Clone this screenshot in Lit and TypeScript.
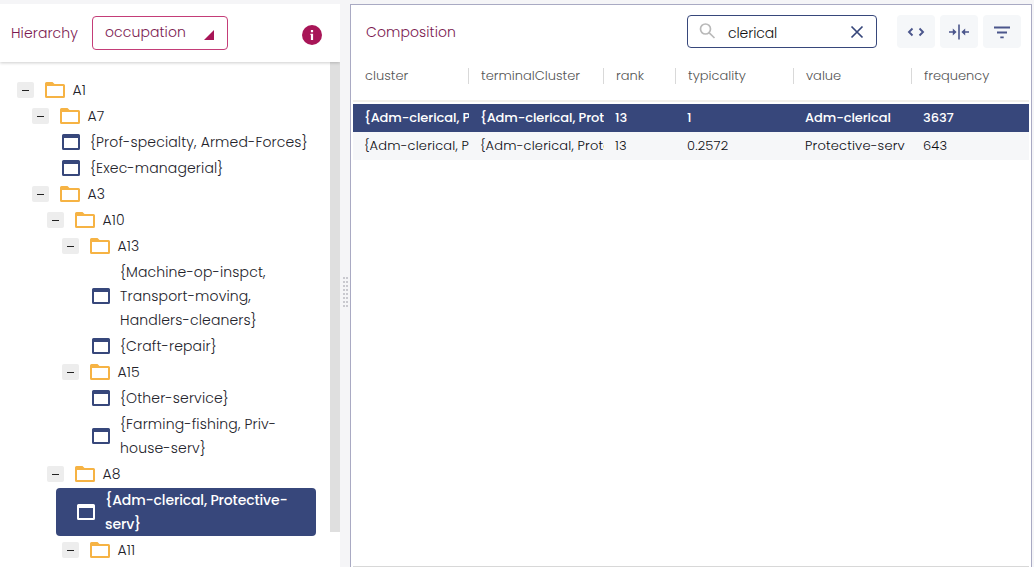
import { LitElement, html, css, svg, nothing } from "lit";
import { customElement } from "lit/decorators.js";
import { classMap } from "lit/directives/class-map.js";
import { styleMap } from "lit/directives/style-map.js";

interface TreeItem { level: number; lines: string[]; leaf?: boolean; selected?: boolean; }

const TREE: TreeItem[] = [
  { level: 0, lines: ["A1"] },
  { level: 1, lines: ["A7"] },
  { level: 2, leaf: true, lines: ["{Prof-specialty, Armed-Forces}"] },
  { level: 2, leaf: true, lines: ["{Exec-managerial}"] },
  { level: 1, lines: ["A3"] },
  { level: 2, lines: ["A10"] },
  { level: 3, lines: ["A13"] },
  { level: 4, leaf: true, lines: ["{Machine-op-inspct,", "Transport-moving,", "Handlers-cleaners}"] },
  { level: 4, leaf: true, lines: ["{Craft-repair}"] },
  { level: 3, lines: ["A15"] },
  { level: 4, leaf: true, lines: ["{Other-service}"] },
  { level: 4, leaf: true, lines: ["{Farming-fishing, Priv-", "house-serv}"] },
  { level: 2, lines: ["A8"] },
  { level: 3, leaf: true, selected: true, lines: ["{Adm-clerical, Protective-", "serv}"] },
  { level: 3, lines: ["A11"] },
];

const COLUMNS = ["cluster", "terminalCluster", "rank", "typicality", "value", "frequency"];

const ROWS = [
  { selected: true, cells: ["{Adm-clerical, Protective-serv}", "{Adm-clerical, Protective-serv}", "13", "1", "Adm-clerical", "3637"] },
  { selected: false, cells: ["{Adm-clerical, Protective-serv}", "{Adm-clerical, Protective-serv}", "13", "0.2572", "Protective-serv", "643"] },
];

const folderIcon = svg`<svg class="folder" width="20" height="16" viewBox="0 0 20 16">
  <path fill="#f6b344" fill-rule="evenodd" d="M1.5 0H7.5L9.5 2H18.5Q20 2 20 3.5V14.500Q20 16 18.500 16H1.500Q0 16 0 14.500V1.500Q0 0 1.500 0ZM2 4V14H18V4Z"/></svg>`;
const windowIcon = svg`<svg class="window" width="18" height="16" viewBox="0 0 18 16">
  <path fill="currentColor" fill-rule="evenodd" d="M1.500 0H16.500Q18 0 18 1.500V14.500Q18 16 16.500 16H1.500Q0 16 0 14.500V1.500Q0 0 1.500 0ZM2 4V14H16V4Z"/></svg>`;

@customElement("hierarchy-panel")
class HierarchyPanel extends LitElement {
  static styles = css`
    :host { display: flex; flex-direction: column; background: #fff; overflow: hidden; }
    .head {
      box-sizing: border-box; height: 58px; flex: none; display: flex; align-items: center;
      padding: 0 18px 0 11px; color: #7b1850; position: relative;
      box-shadow: 0 1px 3px rgba(0, 0, 0, 0.2);
    }
    .title { width: 81px; letter-spacing: 0.1px; }
    .select {
      box-sizing: border-box; width: 136px; height: 34px; display: flex; align-items: center;
      justify-content: space-between; padding: 0 13px 2px 12px; margin-right: auto;
      border: 1px solid #c43d78; border-radius: 4px;
    }
    .choice { letter-spacing: 0.1px; }
    .caret { margin-top: 5px; }
    .info { margin-top: 4px; }
    .body { flex: 1; min-height: 0; display: flex; justify-content: space-between; }
    .tree { width: 316px; padding-top: 15px; color: #22222a; letter-spacing: 0.14px; }
    .bar { width: 10px; height: 470px; background: #dfdfdf; }
    .node { display: flex; align-items: center; padding: 1px 0; line-height: 24px; }
    .inner { display: flex; align-items: center; flex: 1; white-space: nowrap; }
    .toggle {
      width: 17px; height: 16px; border-radius: 2px; background: #ededed;
      display: flex; align-items: center; justify-content: center; margin-right: 11px;
    }
    .dash { width: 7px; height: 1px; background: #222; }
    .folder { margin-right: 7.500px; }
    .window { margin-right: 10.500px; color: #37477b; }
    .leaf .inner { padding-left: 20.600px; margin-left: -6px; }
    .selected .inner { background: #37477b; border-radius: 4px; color: #fff; font-weight: 500; letter-spacing: -0.14px; }
    .selected .window { color: #fff; }
  `;

  node(item: TreeItem) {
    return html`<div
      class=${classMap({ node: true, leaf: !!item.leaf, selected: !!item.selected })}
      style=${styleMap({ paddingLeft: `${17 + item.level * 15}px` })}>
      <div class="inner">
        ${item.leaf ? nothing : html`<span class="toggle"><span class="dash"></span></span>`}
        ${item.leaf ? windowIcon : folderIcon}
        <div>${item.lines.map((l) => html`<div>${l}</div>`)}</div>
      </div>
    </div>`;
  }

  render() {
    return html`
      <div class="head">
        <div class="title">Hierarchy</div>
        <div class="select">
          <span class="choice">occupation</span>
          <svg class="caret" width="10" height="10" viewBox="0 0 10 10"><path fill="#a81557" d="M10 0V10H0Z"/></svg>
        </div>
        <svg class="info" width="20" height="20" viewBox="0 0 20 20">
          <circle cx="10" cy="10" r="10" fill="#a81557"/>
          <path fill="#fff" d="M8.900 5h2.200v2.200H8.900zM8.400 8.800h2.700V15H8.900V10h-.5z"/>
        </svg>
      </div>
      <div class="body">
        <div class="tree">${TREE.map((i) => this.node(i))}</div>
        <div class="bar"></div>
      </div>`;
  }
}

@customElement("composition-panel")
class CompositionPanel extends LitElement {
  static styles = css`
    :host {
      box-sizing: border-box; display: flex; flex-direction: column; background: #fff;
      border: 1px solid #a9aac3; border-bottom: none; padding: 0 2px;
    }
    .head { display: flex; height: 55px; box-sizing: border-box; padding: 10px 8px 0 13px; align-items: flex-start; }
    .title { color: #7b1850; margin-right: auto; line-height: 34px; letter-spacing: 0.1px; }
    .search {
      box-sizing: border-box; width: 190px; height: 33px; border: 1px solid #37477b; border-radius: 4px;
      display: flex; align-items: center; padding: 0 12px 0 11px; margin-right: 20px; color: #111;
    }
    .query { margin-left: 12px; margin-right: auto; padding-top: 2px; letter-spacing: -0.1px; }
    .tools { display: flex; gap: 5px; }
    .tool {
      width: 38px; height: 33px; border-radius: 4px; background: #f5f7f9;
      display: flex; align-items: center; justify-content: center;
    }
    .columns, .row { display: grid; grid-template-columns: 116px 135px 72px 118px 118px 1fr; }
    .columns { height: 40px; color: #555; border-bottom: 2px solid #f2f0eb; margin-bottom: 2px; font-size: 13px; }
    .column { height: 16px; margin-top: 8px; line-height: 16px; padding-left: 12px; border-right: 1px solid #d9d9d9; }
    .column:last-child { border-right: none; }
    .row { height: 28px; line-height: 27px; color: #0c0c12; background: #f6f7f9; font-size: 13px; letter-spacing: 0.18px; }
    .row.selected { background: #37477b; color: #fff; font-weight: 500; letter-spacing: -0.08px; }
    .cell { margin-left: 11px; overflow: hidden; white-space: nowrap; }
    .foot { margin-top: auto; height: 1px; background: #d8d8d8; }
  `;

  render() {
    return html`
      <div class="head">
        <div class="title">Composition</div>
        <div class="search">
          <svg width="17" height="17" viewBox="0 0 17 17" fill="none" stroke="#b9b9b9" stroke-width="1.700">
            <circle cx="6.500" cy="6" r="5"/><path d="M10 9.700L15.500 15"/></svg>
          <div class="query">clerical</div>
          <svg width="14" height="14" viewBox="0 0 14 14" fill="none" stroke="#37477b" stroke-width="1.700">
            <path d="M1.500 1.500L12.500 12.500M12.500 1.500L1.500 12.500"/></svg>
        </div>
        <div class="tools">
          <div class="tool"><svg width="22" height="22" viewBox="0 0 22 22" fill="none" stroke="#4b568c" stroke-width="1.900">
            <path d="M7.500 7.500L4 11L7.500 14.500M14.500 7.500L18 11L14.500 14.500"/></svg></div>
          <div class="tool"><svg width="22" height="22" viewBox="0 0 22 22" fill="none" stroke="#4b568c" stroke-width="1.600">
            <path d="M11 3.500V18.500M1 11H7M21 11H15"/>
            <path fill="#4b568c" stroke="none" d="M4.800 7.500L8.600 11L4.800 14.500ZM17.200 7.500L13.400 11L17.200 14.500Z"/></svg></div>
          <div class="tool"><svg width="22" height="22" viewBox="0 0 22 22" fill="none" stroke="#4b568c" stroke-width="1.800">
            <path d="M3 6.500H19M6 11.500H16M9.300 16.300H12.700"/></svg></div>
        </div>
      </div>
      <div class="columns">${COLUMNS.map((c) => html`<div class="column">${c}</div>`)}</div>
      ${ROWS.map((r) => html`<div class=${classMap({ row: true, selected: r.selected })}>
        ${r.cells.map((c) => html`<div class="cell">${c}</div>`)}
      </div>`)}
      <div class="foot"></div>`;
  }
}

@customElement("app-root")
class AppRoot extends LitElement {
  static styles = css`
    :host {
      box-sizing: border-box; display: grid; grid-template-columns: 340px 10px 682px; height: 567px;
      padding-top: 4px; background: #f5f5f7; overflow: hidden;
      font: 300 14px/20px Poppins, Inter, sans-serif;
    }
    .splitter { display: flex; align-items: center; justify-content: center; padding-top: 13px; }
    hierarchy-panel, composition-panel { min-height: 0; }
  `;

  render() {
    const dots = [0, 1, 2, 3, 4, 5, 6, 7].map((i) => svg`
      <rect x="1" y=${i * 4} width="2" height="2"/><rect x="4" y=${i * 4} width="2" height="2"/>`);
    return html`
      <hierarchy-panel></hierarchy-panel>
      <div class="splitter"><svg width="6" height="30" viewBox="0 0 6 30" fill="#c9c9cf">${dots}</svg></div>
      <composition-panel></composition-panel>`;
  }
}
